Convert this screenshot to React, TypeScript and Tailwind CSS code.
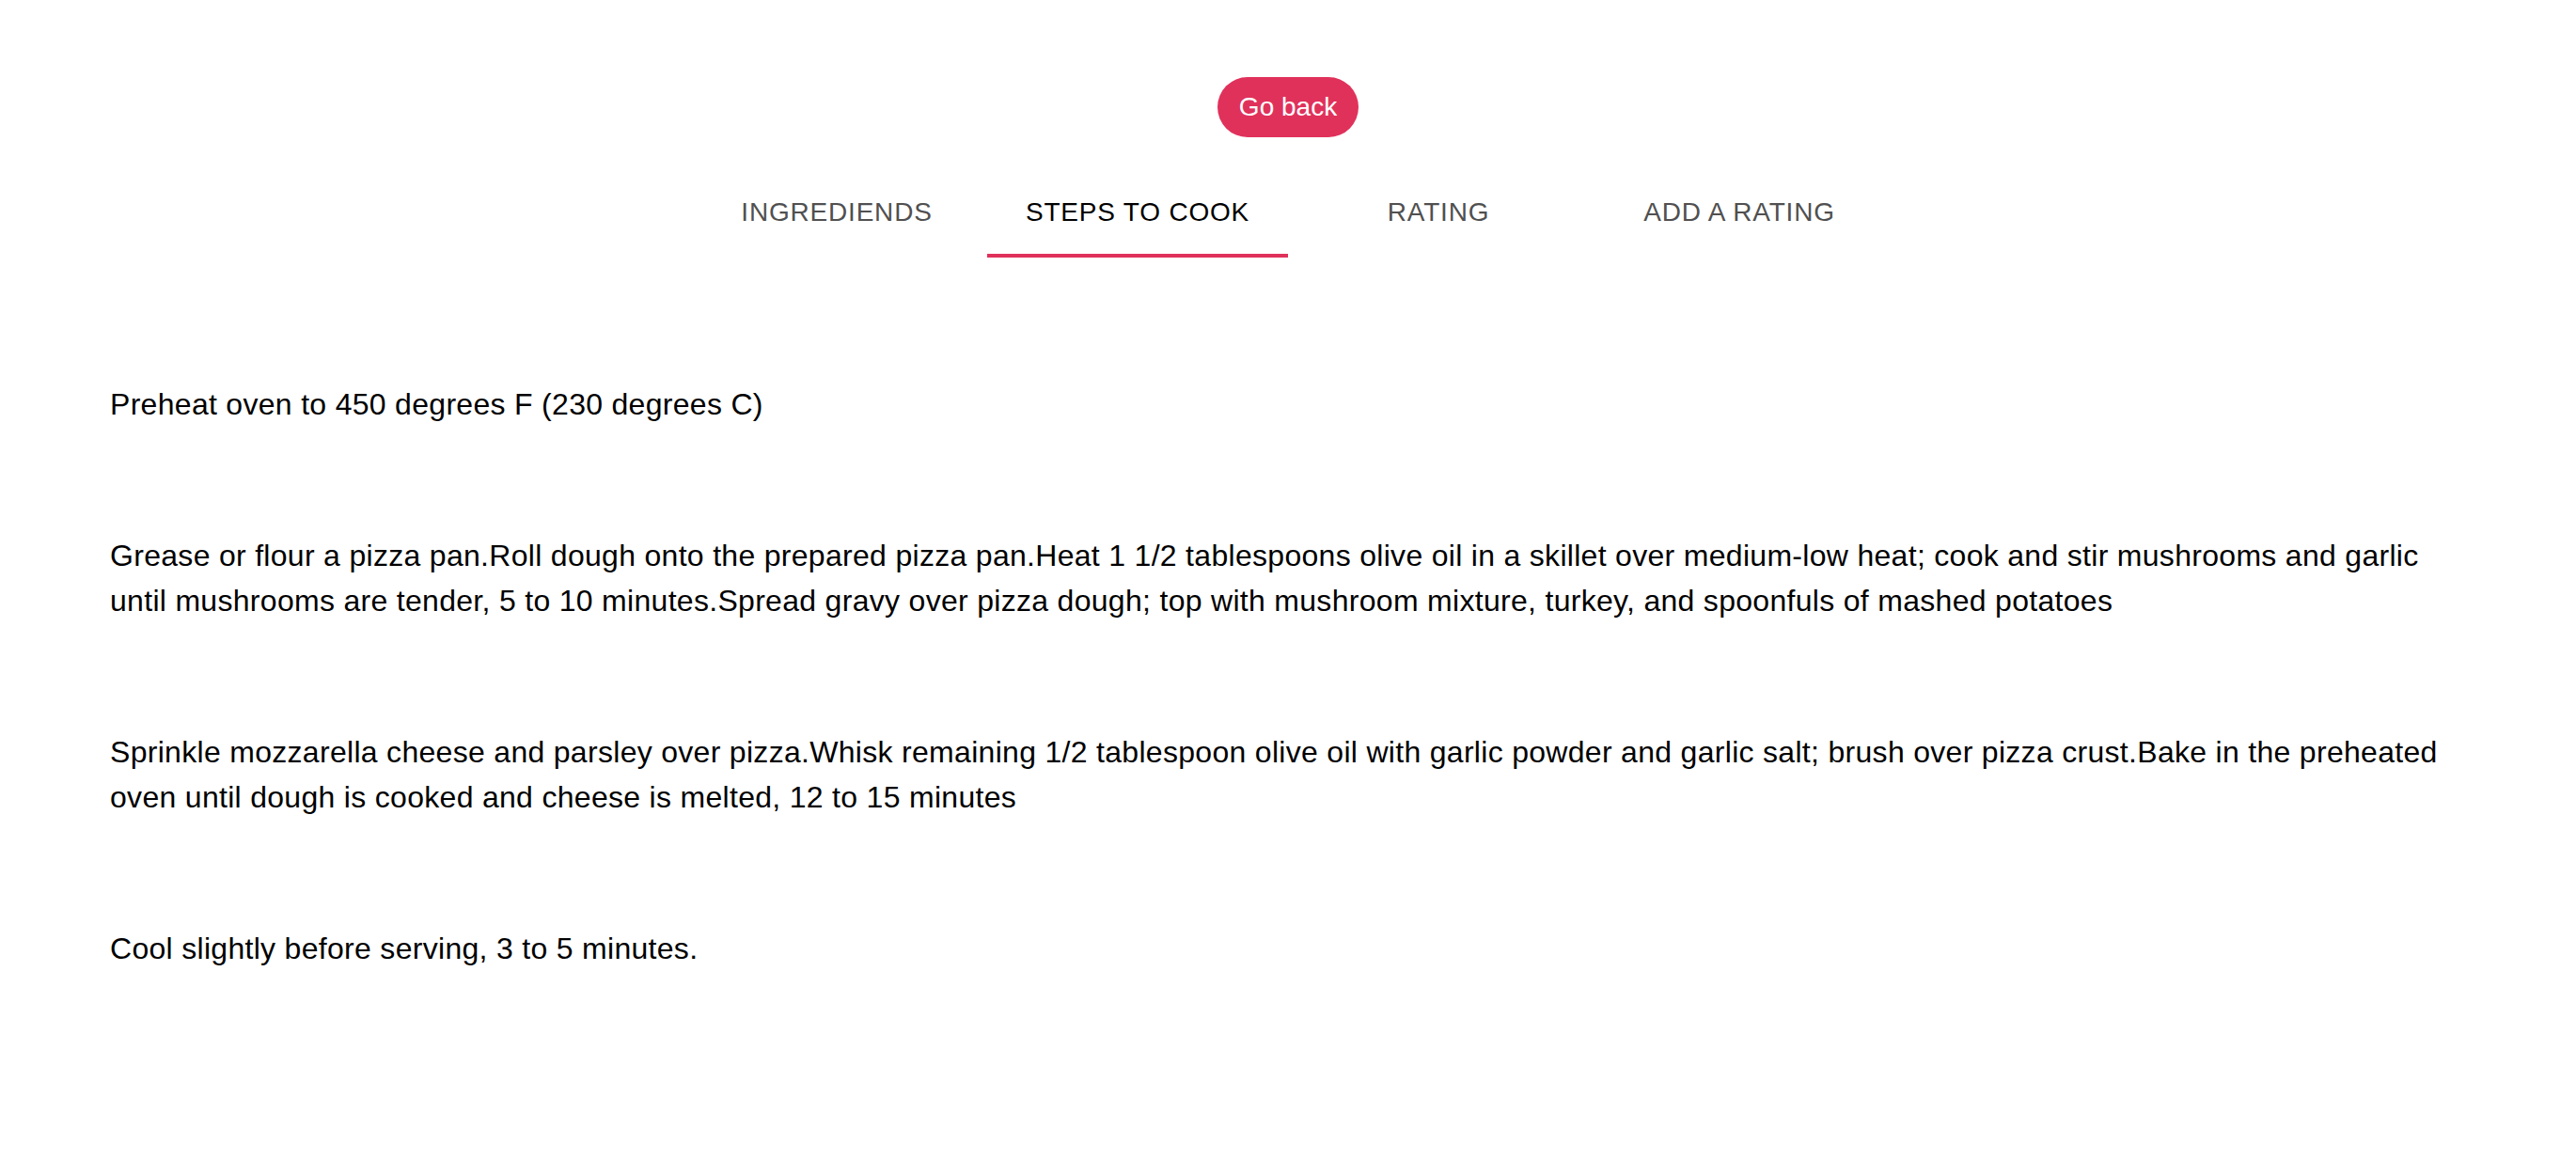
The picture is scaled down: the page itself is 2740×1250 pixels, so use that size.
import { useState } from 'react';

const tabs = ['Ingrediends', 'Steps to cook', 'Rating', 'Add a rating'];

const steps = [
  'Preheat oven to 450 degrees F (230 degrees C)',
  'Grease or flour a pizza pan.Roll dough onto the prepared pizza pan.Heat 1 1/2 tablespoons olive oil in a skillet over medium-low heat; cook and stir mushrooms and garlic until mushrooms are tender, 5 to 10 minutes.Spread gravy over pizza dough; top with mushroom mixture, turkey, and spoonfuls of mashed potatoes',
  'Sprinkle mozzarella cheese and parsley over pizza.Whisk remaining 1/2 tablespoon olive oil with garlic powder and garlic salt; brush over pizza crust.Bake in the preheated oven until dough is cooked and cheese is melted, 12 to 15 minutes',
  'Cool slightly before serving, 3 to 5 minutes.',
];

export default function App() {
  const [active, setActive] = useState(1);

  return (
    <div className="min-h-[1250px] bg-white font-['Liberation_Sans',Arial,sans-serif] text-black">
      {/* Header: back button + tabs */}
      <div className="flex flex-col items-center pt-[82px]">
        <button className="h-[64px] rounded-full bg-[#e0315b] px-[23px] text-[28px] leading-none text-white">
          Go back
        </button>

        <div className="mt-[32px] flex">
          {tabs.map((tab, i) => (
            <button
              key={tab}
              onClick={() => setActive(i)}
              className={
                'relative flex h-[96px] w-[320px] items-center justify-center text-[28px] uppercase tracking-[0.8px] ' +
                (active === i ? 'text-black' : 'text-[#505050]')
              }
            >
              {tab}
              {active === i && (
                <span className="absolute bottom-0 left-0 h-[4px] w-full bg-[#e0315b]" />
              )}
            </button>
          ))}
        </div>
      </div>

      {/* Steps */}
      <div className="flex flex-col gap-[113px] px-[117px] pt-[132px] pb-[100px]">
        {steps.map((step) => (
          <p key={step} className="text-[32px] leading-[48px] tracking-[0.3px]">
            {step}
          </p>
        ))}
      </div>
    </div>
  );
}
